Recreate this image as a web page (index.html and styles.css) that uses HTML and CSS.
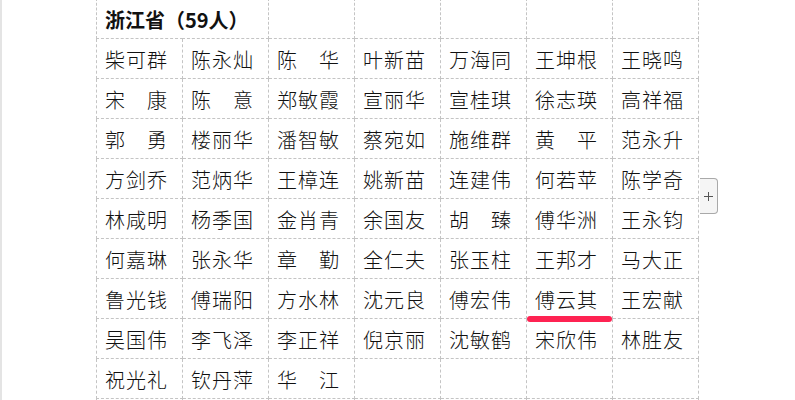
FILE: index.html
```html
<!DOCTYPE html>
<html lang="zh-CN">
<head>
<meta charset="utf-8">
<title>浙江省（59人）</title>
<link rel="stylesheet" href="styles.css">
</head>
<body>
<div class="page">
  <div class="rail"></div>
  <main class="doc">
    <div class="table-wrap">
      <table class="roster">
        <colgroup>
          <col class="c"><col class="c"><col class="c"><col class="c"><col class="c"><col class="c"><col class="c">
        </colgroup>
        <tbody>
          <tr class="head"><td colspan="2"><span class="title">浙江省（59人）</span></td><td></td><td></td><td></td><td></td><td></td></tr>
          <tr><td><span class="n">柴可群</span></td><td><span class="n">陈永灿</span></td><td><span class="n">陈华</span></td><td><span class="n">叶新苗</span></td><td><span class="n">万海同</span></td><td><span class="n">王坤根</span></td><td><span class="n">王晓鸣</span></td></tr>
          <tr><td><span class="n">宋康</span></td><td><span class="n">陈意</span></td><td><span class="n">郑敏霞</span></td><td><span class="n">宣丽华</span></td><td><span class="n">宣桂琪</span></td><td><span class="n">徐志瑛</span></td><td><span class="n">高祥福</span></td></tr>
          <tr><td><span class="n">郭勇</span></td><td><span class="n">楼丽华</span></td><td><span class="n">潘智敏</span></td><td><span class="n">蔡宛如</span></td><td><span class="n">施维群</span></td><td><span class="n">黄平</span></td><td><span class="n">范永升</span></td></tr>
          <tr><td><span class="n">方剑乔</span></td><td><span class="n">范炳华</span></td><td><span class="n">王樟连</span></td><td><span class="n">姚新苗</span></td><td><span class="n">连建伟</span></td><td><span class="n">何若苹</span></td><td><span class="n">陈学奇</span></td></tr>
          <tr><td><span class="n">林咸明</span></td><td><span class="n">杨季国</span></td><td><span class="n">金肖青</span></td><td><span class="n">余国友</span></td><td><span class="n">胡臻</span></td><td><span class="n">傅华洲</span></td><td><span class="n">王永钧</span></td></tr>
          <tr><td><span class="n">何嘉琳</span></td><td><span class="n">张永华</span></td><td><span class="n">章勤</span></td><td><span class="n">全仁夫</span></td><td><span class="n">张玉柱</span></td><td><span class="n">王邦才</span></td><td><span class="n">马大正</span></td></tr>
          <tr><td><span class="n">鲁光钱</span></td><td><span class="n">傅瑞阳</span></td><td><span class="n">方水林</span></td><td><span class="n">沈元良</span></td><td><span class="n">傅宏伟</span></td><td class="marked"><span class="n">傅云其</span><span class="mark"></span></td><td><span class="n">王宏献</span></td></tr>
          <tr><td><span class="n">吴国伟</span></td><td><span class="n">李飞泽</span></td><td><span class="n">李正祥</span></td><td><span class="n">倪京丽</span></td><td><span class="n">沈敏鹤</span></td><td><span class="n">宋欣伟</span></td><td><span class="n">林胜友</span></td></tr>
          <tr><td><span class="n">祝光礼</span></td><td><span class="n">钦丹萍</span></td><td><span class="n">华江</span></td><td></td><td></td><td></td><td></td></tr>
          <tr><td></td><td></td><td></td><td></td><td></td><td></td><td></td></tr>
        </tbody>
      </table>
      <button class="add-col" type="button" aria-label="添加列">
        <svg width="9" height="9" viewBox="0 0 9 9"><path d="M4.5 0V9M0 4.5H9" stroke="#555" stroke-width="1" fill="none"/></svg>
      </button>
    </div>
  </main>
</div>
</body>
</html>
```

FILE: styles.css
```css
html, body {
  margin: 0;
  padding: 0;
  background: #fff;
  overflow: hidden;
}

.page {
  display: flex;
  height: 400px;
  overflow: hidden;
}

.rail {
  width: 2px;
  flex: 0 0 2px;
  background: #e4e4e4;
}

.doc {
  flex: 1;
  padding-left: 94px;
}

.table-wrap {
  position: relative;
  width: 603px;
  margin-top: -2px;
}

.roster {
  border-collapse: collapse;
  table-layout: fixed;
  width: 603px;
  font-family: "Noto Sans CJK SC", "Noto Sans", sans-serif;
  font-size: 20px;
  font-weight: 300;
  color: #111;
}

.roster .c {
  width: 86px;
}

.roster td {
  border: 1px dashed #c4c4c4;
  height: 40px;
  box-sizing: border-box;
  padding: 6px 0 0 8px;
  line-height: 30px;
  vertical-align: top;
  white-space: nowrap;
}

.title {
  font-weight: bold;
}

.n {
  display: inline-block;
  width: 62px;
  text-align: justify;
  text-align-last: justify;
}

.marked {
  position: relative;
}

.mark {
  position: absolute;
  left: 0;
  right: 0;
  bottom: -4px;
  height: 6px;
  border-radius: 3px;
  background: #fe2352;
}

.add-col {
  position: absolute;
  left: 604px;
  top: 180px;
  width: 18px;
  height: 36px;
  padding: 0;
  margin: 0;
  border: 1px solid #a9a9a9;
  border-left: none;
  border-radius: 0 4px 4px 0;
  background: #f5f5f5;
  display: flex;
  align-items: center;
  justify-content: center;
}
```
